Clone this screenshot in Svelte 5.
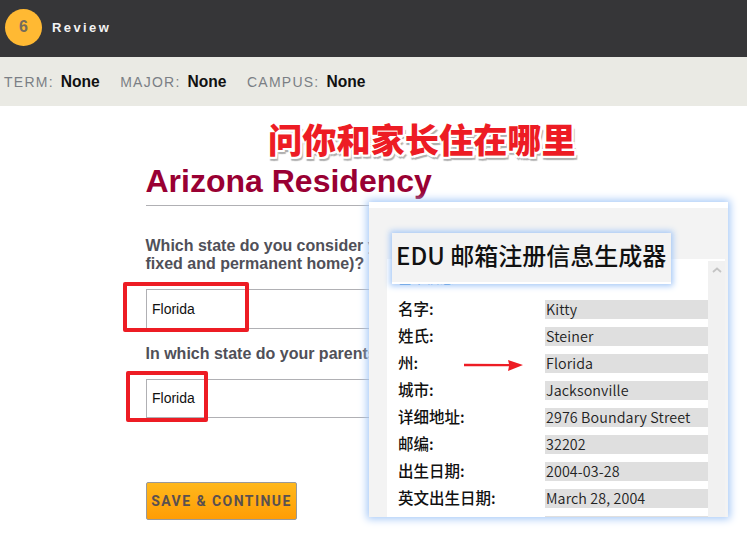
<script>
  const rows = [
    ['名字:', 'Kitty'],
    ['姓氏:', 'Steiner'],
    ['州:', 'Florida'],
    ['城市:', 'Jacksonville'],
    ['详细地址:', '2976 Boundary Street'],
    ['邮编:', '32202'],
    ['出生日期:', '2004-03-28'],
    ['英文出生日期:', 'March 28, 2004'],
    ['', '']
  ];
  const meta = [['TERM:', 'None'], ['MAJOR:', 'None'], ['CAMPUS:', 'None']];
</script>

<div class="page">
  <header class="top">
    <span class="step">6</span>
    <span class="step-name">Review</span>
  </header>
  <div class="meta">
    {#each meta as [k, v]}
      <span class="meta-item"><span class="k">{k}</span> <b>{v}</b></span>
    {/each}
  </div>
  <main class="form">
    <h1>Arizona Residency</h1>
    <p class="q q1">Which state do you consider your legal residence (your true,<br />fixed and permanent home)?</p>
    <div class="select">Florida</div>
    <p class="q q2">In which state do your parents live?</p>
    <div class="select s2">Florida</div>
    <button class="save">SAVE &amp; CONTINUE</button>
  </main>

  <div class="caption">问你和家长住在哪里</div>
  <div class="mark m1"></div>
  <div class="mark m2"></div>

  <aside class="panel">
    <div class="panel-body">
      <div class="sheet">
        <div class="sheet-title">基本信息</div>
        {#each rows as [label, value]}
          <div class="row"><span class="label">{label}</span><span class="value">{value}</span></div>
        {/each}
      </div>
      <div class="scrollbar">
        <svg width="10" height="6" viewBox="0 0 10 6"><path d="M1 5 L5 1.500 L9 5" fill="none" stroke="#c4c4c4" stroke-width="1.800"/></svg>
      </div>
    </div>
    <div class="tip">EDU 邮箱注册信息生成器</div>
    <svg class="arrow" width="62" height="16" viewBox="0 0 62 16">
      <path d="M1 6.800 L46 7 L45 3 L60 8 L45 14 L46 9.300 L1 9.200 Z" fill="#ed1c24"/>
    </svg>
  </aside>
</div>

<style>
  :global(body) { margin: 0; background: #fff; }
  .page {
    position: relative;
    width: 747px;
    height: 544px;
    overflow: hidden;
    font-family: "Liberation Sans", Arial, sans-serif;
  }
  .top {
    height: 57px;
    background: #363638;
    display: flex;
    align-items: center;
    padding-left: 5px;
    gap: 10px;
    box-sizing: border-box;
    padding-bottom: 3px;
  }
  .step {
    width: 37px;
    height: 37px;
    border-radius: 50%;
    background: #ffb933;
    color: #736b5c;
    font-size: 16px;
    font-weight: bold;
    display: flex;
    align-items: center;
    justify-content: center;
  }
  .step-name {
    color: #f2f2f2;
    font-size: 13px;
    font-weight: bold;
    letter-spacing: 2.4px;
  }
  .meta {
    height: 49px;
    background: #eaeae4;
    display: flex;
    align-items: center;
    padding-left: 4px;
    gap: 20.500px;
    font-size: 14px;
  }
  .k { color: #7b7f85; letter-spacing: 1.25px; }
  .meta b { color: #111; font-size: 15.600px; margin-left: 3px; }
  .form {
    padding-left: 146px;
    width: 400px;
    position: relative;
  }
  h1 {
    margin: 0 0 0 -0.500px;
    padding-top: 57px;
    height: 42px;
    font-size: 32px;
    line-height: 36px;
    color: #990033;
    border-bottom: 1px solid #b0b0b4;
    box-sizing: content-box;
    width: 400px;
  }
  .q {
    margin: 0 0 0 -0.500px;
    font-size: 16px;
    line-height: 18px;
    font-weight: bold;
    color: #505058;
    white-space: nowrap;
  }
  .q1 { padding-top: 31px; }
  .q2 { padding-top: 16px; }
  .select {
    margin-top: 16px;
    width: 400px;
    height: 38px;
    border: 1px solid #b0b0b4;
    border-right: 0;
    display: flex;
    align-items: center;
    padding-left: 5px;
    font-size: 14px;
    color: #111;
    box-sizing: content-box;
  }
  .s2 { margin-top: 16px; height: 36px; padding-bottom: 1px; }
  .save {
    display: block;
    margin-top: 64px;
    width: 151px;
    height: 38px;
    border: 1px solid #999;
    border-radius: 2px;
    background: linear-gradient(#ffb81c, #ff9d05);
    color: #5a5050;
    font-family: Roboto, sans-serif;
    font-size: 14px;
    font-weight: 700;
    letter-spacing: 1.45px;
    padding: 0;
  }
  .caption {
    position: absolute;
    left: 268px;
    top: 117px;
    font-family: "Noto Sans CJK SC", sans-serif;
    font-weight: 900;
    font-size: 34.200px;
    line-height: 42px;
    color: #ed1c24;
    text-shadow: -2px -2px 0 #fff, 2px -2px 0 #fff, -2px 2px 0 #fff, 2px 2px 0 #fff, 0 -2px 0 #fff, 0 2px 0 #fff, -2px 0 0 #fff, 2px 0 0 #fff, 3px 4px 1px #b0b0b0, 0 4px 1px #b0b0b0;
    white-space: nowrap;
  }
  .mark {
    position: absolute;
    border: 4px solid #ed1c24;
    border-radius: 2px;
    box-sizing: border-box;
  }
  .m1 { left: 123px; top: 282px; width: 126px; height: 50px; }
  .m2 { left: 126px; top: 371px; width: 82px; height: 51px; }
  .panel {
    position: absolute;
    left: 369px;
    top: 202px;
    width: 359px;
    height: 315px;
    background: #fff;
    box-shadow: 0 0 8px 2px #a5c8f7;
  }
  .panel-body {
    margin-top: 6px;
    height: 309px;
    background: #f3f3f3;
    position: relative;
    overflow: hidden;
  }
  .sheet {
    position: absolute;
    left: 18px;
    top: 51px;
    width: 338px;
    height: 258px;
    background: linear-gradient(#fff 2px, transparent 2px), linear-gradient(90deg, #fff 321px, transparent 321px);
    font-family: "Noto Sans CJK SC", sans-serif;
    color: #111;
  }
  .sheet-title {
    height: 41px;
    padding: 8px 0 0 11px;
    box-sizing: border-box;
    color: #1a73c8;
    font-size: 14px;
    line-height: 20px;
  }
  .row {
    height: 19px;
    margin-bottom: 8px;
    display: flex;
    line-height: 17px;
    font-size: 16px;
  }
  .label { width: 158px; padding-left: 11px; box-sizing: border-box; font-weight: 500; color: #111; font-size: 15.500px; }
  .value {
    width: 163px;
    background: #dfdfdf;
    padding-left: 1px;
    box-sizing: border-box;
    font-size: 14.300px;
    font-weight: 350;
    letter-spacing: 0.100px;
    color: #222;
  }
  .scrollbar {
    position: absolute;
    left: 339px;
    top: 53px;
    width: 17px;
    bottom: 0;
    background: #f1f1f1;
    display: flex;
    justify-content: center;
    padding-top: 6px;
    box-sizing: border-box;
  }
  .scrollbar svg { display: block; }
  .tip {
    position: absolute;
    left: 23px;
    top: 31px;
    width: 279px;
    height: 51px;
    box-sizing: border-box;
    background: linear-gradient(#f3f3f3 49px, #fff 49px);
    box-shadow: 0 0 6px 2px #a5c8f7;
    font-family: "Noto Sans CJK SC", sans-serif;
    font-weight: 500;
    font-size: 24px;
    line-height: 44px;
    padding-left: 4px;
    color: #111;
    white-space: nowrap;
  }
  .arrow {
    position: absolute;
    left: 94px;
    top: 155px;
  }
</style>
